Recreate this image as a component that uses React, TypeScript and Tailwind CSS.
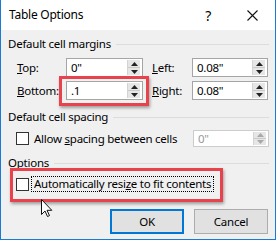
import React from "react";

const font = { fontFamily: '"Segoe UI", "Noto Sans", Arial, sans-serif' };

function Spinner({ disabled }: { disabled?: boolean }) {
  const c = disabled ? "#a8a8a8" : "#222";
  return (
    <div className="flex flex-col w-[13px] h-full border-l border-[#d4d4d4]">
      <div className="flex-1 flex items-center justify-center bg-[#e6e6e6] border-b border-[#c9c9c9]">
        <svg width="7" height="4" viewBox="0 0 7 4">
          <polygon points="0,4 7,4 3.5,0" fill={c} />
        </svg>
      </div>
      <div className="flex-1 flex items-center justify-center bg-[#e6e6e6]">
        <svg width="7" height="4" viewBox="0 0 7 4">
          <polygon points="0,0 7,0 3.5,4" fill={c} />
        </svg>
      </div>
    </div>
  );
}

function NumBox({ value, w, disabled }: { value: string; w: string; disabled?: boolean }) {
  return (
    <div
      className={`flex h-full ${w} border ${disabled ? "border-[#cccccc] text-[#9a9a9a]" : "border-[#a5a5a5] text-black"} bg-white pr-[2px] py-[1px]`}
    >
      <div className="flex-1 flex items-center pl-[4px]">{value}</div>
      <Spinner disabled={disabled} />
    </div>
  );
}

function Header({ title }: { title: string }) {
  return (
    <div className="flex items-center h-[14px] pl-[7px] pr-[6px]">
      <span>{title}</span>
      <div className="flex-1 h-px bg-[#dcdcdc] ml-[5px]" />
    </div>
  );
}

function Checkbox() {
  return <div className="w-[13px] h-[13px] border border-[#333] bg-white shrink-0" />;
}

export default function App() {
  return (
    <div
      className="relative w-[276px] h-[240px] border border-t-0 border-[#1a7bd6] bg-[#f0f0f0] text-[11.5px] tracking-[-0.25px] text-black overflow-hidden"
      style={font}
    >
      <div className="flex items-center h-[30px] bg-white pl-[8px] text-[12px]">
        <span>Table Options</span>
        <span className="ml-auto mr-[36px] text-[14px]">?</span>
        <svg width="11" height="11" viewBox="0 0 11 11" className="mr-[17px]">
          <path d="M0.5 0.5 L10.5 10.5 M10.5 0.5 L0.5 10.5" stroke="#111" strokeWidth="1.1" />
        </svg>
      </div>

      <div className="flex flex-col">
        <div className="mt-[7px]">
          <Header title="Default cell margins" />
        </div>
        <div className="flex items-center h-[19px] mt-[7px] pl-[16px]">
          <span className="w-[49px]"><u>T</u>op:</span>
          <NumBox value={'0"'} w="w-[77px]" />
          <span className="w-[40px] ml-[9px]"><u>L</u>eft:</span>
          <NumBox value={'0.08"'} w="w-[76px]" />
        </div>
        <div className="flex items-center h-[19px] mt-[4px] pl-[16px]">
          <span className="w-[49px]"><u>B</u>ottom:</span>
          <NumBox value=".1" w="w-[77px]" />
          <span className="w-[40px] ml-[9px]"><u>R</u>ight:</span>
          <NumBox value={'0.08"'} w="w-[76px]" />
        </div>

        <div className="mt-[10px]">
          <Header title="Default cell spacing" />
        </div>
        <div className="flex items-center h-[17px] mt-[6px] pl-[15px]">
          <Checkbox />
          <span className="ml-[5px]">Allow <u>s</u>pacing between cells</span>
          <div className="ml-auto mr-[6px] h-full">
            <NumBox value={'0"'} w="w-[76px]" disabled />
          </div>
        </div>

        <div className="mt-[9px]">
          <Header title="Options" />
        </div>
        <div className="flex items-center h-[16px] mt-[6px] pl-[15px]">
          <Checkbox />
          <span className="ml-[2px] px-[2px] border border-dotted border-black leading-[14px]">
            Automatically resi<u>z</u>e to fit contents
          </span>
        </div>

        <div className="flex mt-[17px] pl-[109px] gap-[10px]">
          <button className="w-[74px] h-[25px] border-2 border-[#0078d7] bg-[#e1e1e1]">OK</button>
          <button className="w-[74px] h-[25px] border border-[#adadad] bg-[#e1e1e1]">Cancel</button>
        </div>
      </div>

      <div className="absolute left-[58px] top-[76px] w-[90px] h-[30px] border-[3px] border-[#e8434c] shadow-[1px_2px_3px_rgba(0,0,0,0.35)]" />
      <div className="absolute left-[9px] top-[168px] w-[213px] h-[34px] border-[3px] border-[#e8434c] shadow-[1px_2px_3px_rgba(0,0,0,0.35)]" />

      <svg className="absolute left-[40px] top-[199px]" width="13" height="19" viewBox="0 0 13 19">
        <path d="M0.5 0.5 L0.5 15.5 L4 12 L6.5 17.5 L8.5 16.6 L6 11.3 L10.8 11.3 Z" fill="#fff" stroke="#111" strokeWidth="1" strokeLinejoin="round" />
      </svg>
    </div>
  );
}
